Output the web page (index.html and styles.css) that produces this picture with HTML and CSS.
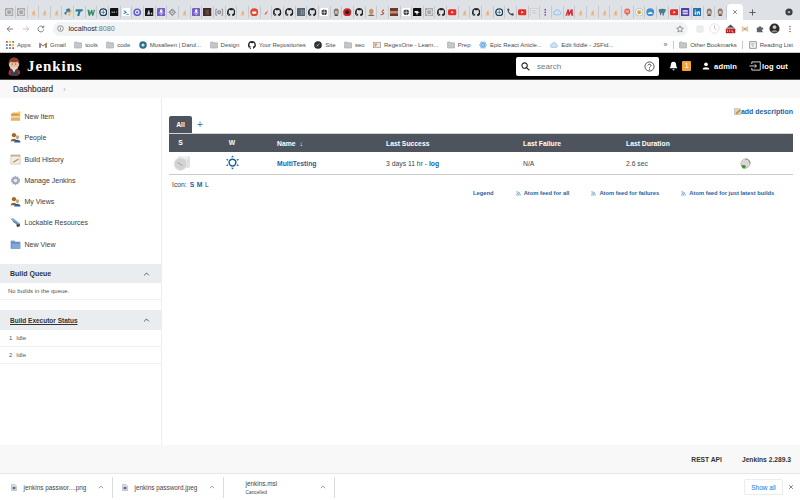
FILE: index.html
```html
<!DOCTYPE html>
<html lang="en">
<head>
<meta charset="utf-8">
<title>Dashboard [Jenkins]</title>
<link rel="stylesheet" href="styles.css">
</head>
<body>
<svg class="defs" aria-hidden="true">
  <symbol id="swirl" viewBox="0 0 10 10"><rect width="10" height="10" rx="1" fill="#a9a9a9"/><rect x="2" y="2" width="6" height="6" rx="2" fill="none" stroke="#e2e2e2" stroke-width="1.2"/></symbol>
  <symbol id="butler" viewBox="0 0 10 10"><path d="M3 9l1-4 2-3 1 1-.5 3 1.500 3z" fill="#eec4a0"/><path d="M4 7l2-3 1 3z" fill="#e3a670"/></symbol>
  <symbol id="py" viewBox="0 0 10 10"><path d="M5 .5c-2 0-2.500 1-2.500 2V4H6v.5H1.800C.8 4.500.5 5.500.5 6s.4 2 1.300 2h1V6.500C2.800 5.500 3.500 5 4.500 5h2c.8 0 1-.6 1-1.200V2.500C7.500 1 6.500.5 5 .5z" fill="#3b78a8"/><path d="M5 9.500c2 0 2.500-1 2.500-2V6H4v-.5h4.200c1 0 1.300-1 1.300-1.500s-.4-2-1.300-2h-1v1.500c0 1-.7 1.500-1.700 1.500" fill="#f3c93f"/></symbol>
  <symbol id="tt" viewBox="0 0 10 10"><path d="M1 1.500h8.500L8.500 4H6.500L5 9.500H2.500L4 4H.5z" fill="#2b7f95"/></symbol>
  <symbol id="w" viewBox="0 0 10 10"><path d="M.5 2h2l1 4 1.500-4h1l1 4 1-4h1.500L7.500 9H6L5 5.500 3.500 9H2z" fill="#2f8c62"/></symbol>
  <symbol id="ring" viewBox="0 0 10 10"><circle cx="5" cy="5" r="4" fill="#fff" stroke="#1e3a4c" stroke-width="1.600"/><path d="M5 2.500v5M2.500 5h5" stroke="#3d87b5" stroke-width="1.300"/></symbol>
  <symbol id="dev" viewBox="0 0 10 10"><rect width="10" height="10" rx="1" fill="#111"/><path d="M2 4h1v2H2zM4.300 4h1.200v2H4.300zM7 4h1l-.5 2z" fill="#ddd"/></symbol>
  <symbol id="chev" viewBox="0 0 10 10"><rect width="10" height="10" rx="2" fill="#fff"/><path d="M2 3l3 2-3 2" fill="none" stroke="#2f7fd1" stroke-width="1.200"/><path d="M5 7.500h3" stroke="#2f7fd1"/></symbol>
  <symbol id="indigo" viewBox="0 0 10 10"><circle cx="5" cy="5" r="3.700" fill="none" stroke="#5a57c9" stroke-width="1.600"/><circle cx="5" cy="5" r="1.300" fill="#5a57c9"/></symbol>
  <symbol id="blk" viewBox="0 0 10 10"><rect width="10" height="10" rx="1" fill="#16181c"/><path d="M2.500 7.500L4 2.500h1l1 5zM7 5.500h1.500v2H7z" fill="#ccc"/></symbol>
  <symbol id="mic" viewBox="0 0 10 10"><rect width="10" height="10" rx="1.500" fill="#7560c9"/><rect x="3.700" y="1.500" width="2.600" height="4.500" rx="1.300" fill="#fff"/><path d="M2.800 5c0 3 4.400 3 4.400 0M5 7v1.500" fill="none" stroke="#fff" stroke-width=".7"/></symbol>
  <symbol id="diamond" viewBox="0 0 10 10"><path d="M5 .5L9.500 5 5 9.500.5 5z" fill="#8b8b8b"/><path d="M5 2.500L7.500 5 5 7.500 2.500 5z" fill="#dcdcdc"/><path d="M5 4L6 5 5 6 4 5z" fill="#777"/></symbol>
  <symbol id="photo" viewBox="0 0 10 10"><rect width="10" height="10" fill="#3c2c30"/><rect x="3" y="2" width="4" height="6" fill="#6e4638"/></symbol>
  <symbol id="obox" viewBox="0 0 10 10"><path d="M2.500 1.500H1v7h1.500M7.500 1.500H9v7H7.500" fill="none" stroke="#666" stroke-width=".8"/><circle cx="5" cy="5" r="1.700" fill="none" stroke="#555" stroke-width="1"/></symbol>
  <symbol id="gh" viewBox="0 0 16 16"><path fill="#222" d="M8 .2a8 8 0 0 0-2.500 15.600c.4.100.5-.2.500-.4v-1.400c-2.200.5-2.700-1-2.700-1-.4-.9-.9-1.200-.9-1.200-.7-.5.100-.5.100-.5.800.1 1.200.8 1.200.8.700 1.200 1.900.9 2.300.7.100-.5.300-.9.500-1.100-1.800-.2-3.600-.9-3.600-4 0-.9.300-1.600.8-2.100-.1-.2-.4-1 .1-2.100 0 0 .7-.2 2.200.8a7.600 7.600 0 0 1 4 0c1.500-1 2.200-.8 2.200-.8.500 1.100.2 1.900.1 2.100.5.600.8 1.300.8 2.100 0 3.100-1.900 3.700-3.700 3.900.3.300.6.800.6 1.500v2.200c0 .2.100.5.600.4A8 8 0 0 0 8 .2z"/></symbol>
  <symbol id="redc" viewBox="0 0 10 10"><circle cx="5" cy="5" r="4.700" fill="#e2492f"/><rect x="2.500" y="4" width="5" height="2.800" rx="1" fill="#fff"/></symbol>
  <symbol id="tick" viewBox="0 0 10 10"><path d="M3 7l1-1 3-3.500L5.500 6.500 3.500 8z" fill="#e2453c"/></symbol>
  <symbol id="ebox" viewBox="0 0 10 10"><rect width="10" height="10" rx=".8" fill="#566470"/><path d="M5 2v6M6.500 3h2M6.500 5h2M6.500 7h2" stroke="#b7c1c8" stroke-width=".8"/></symbol>
  <symbol id="dgear" viewBox="0 0 10 10"><rect width="10" height="10" rx="2" fill="#fff"/><circle cx="5" cy="5" r="3.300" fill="#333"/><path d="M5 1v8M1 5h8" stroke="#fff" stroke-width=".7"/></symbol>
  <symbol id="head" viewBox="0 0 10 10"><ellipse cx="5" cy="4.500" rx="3" ry="4" fill="#86766c"/><ellipse cx="5" cy="5" rx="1.800" ry="2" fill="#dcb9a0"/><path d="M2.500 9.500c.5-2 4.500-2 5 0z" fill="#555"/></symbol>
  <symbol id="redb" viewBox="0 0 10 10"><circle cx="5" cy="5" r="4.800" fill="#d8232a"/><circle cx="5" cy="5" r="2.400" fill="#222"/></symbol>
  <symbol id="tan" viewBox="0 0 10 10"><rect x=".5" width="9" height="10" fill="#e8e2d8"/><ellipse cx="5" cy="4" rx="2.600" ry="3.200" fill="#b79678"/><path d="M1 10c.5-3 7.500-3 8 0z" fill="#75675c"/></symbol>
  <symbol id="jtag" viewBox="0 0 10 10"><path d="M7 2C5 3 4 5 6 5.500S6 8 3 8" fill="none" stroke="#a8593f" stroke-width="1.200"/></symbol>
  <symbol id="brown" viewBox="0 0 10 10"><rect width="10" height="10" fill="#70372c"/><rect y="3.500" width="10" height="3" fill="#c08a70"/></symbol>
  <symbol id="kw" viewBox="0 0 10 10"><rect width="10" height="10" rx="1" fill="#111"/><path d="M2 3.500h3L4 2.500l4 3H5.500v2H4V5.500H2z" fill="#fff"/></symbol>
  <symbol id="yt" viewBox="0 0 10 10"><rect y="1.500" width="10" height="7" rx="1.800" fill="#e52d27"/><path d="M4 3.500L6.700 5 4 6.500z" fill="#fff"/></symbol>
  <symbol id="phone" viewBox="0 0 10 10"><path d="M1.500 1c0 4 3 7.500 7 8l.8-1.800L7 6 6 7C4.500 6 3.500 4.500 3.200 3.200l1-1L3 .5z" fill="#39454f"/></symbol>
  <symbol id="lines" viewBox="0 0 10 10"><rect x=".5" y=".5" width="9" height="9" fill="#eceded" stroke="#b9bcbf" stroke-width=".6"/><path d="M2 3h6M2 5h6M2 7h6" stroke="#a9acaf" stroke-width=".7"/></symbol>
  <symbol id="pdot" viewBox="0 0 10 10"><circle cx="5" cy="2" r="1" fill="#7a3fb8"/><circle cx="5" cy="5" r="1" fill="#7a3fb8"/><circle cx="5" cy="8" r="1" fill="#7a3fb8"/></symbol>
  <symbol id="cloud" viewBox="0 0 10 10"><path d="M2.500 8a2 2 0 0 1-.3-4A3 3 0 0 1 8 4.200 2 2 0 0 1 8 8z" fill="#cfe2f5" stroke="#6fa6dc" stroke-width=".6"/></symbol>
  <symbol id="mred" viewBox="0 0 10 10"><path d="M.5 9L3 1.500h1.500L5 5l2-3.500h2L9.500 9h-2L7 5.500 5 9H3.800L3.500 5.500 2.500 9z" fill="#d6303a"/></symbol>
  <symbol id="pin" viewBox="0 0 10 10"><circle cx="5" cy="4" r="3.500" fill="#e8604c"/><path d="M3 3.300h4M3 4.700h4" stroke="#fff" stroke-width=".7"/><path d="M5 7v2.500" stroke="#e8604c"/></symbol>
  <symbol id="ylw" viewBox="0 0 10 10"><circle cx="5" cy="5" r="4.500" fill="#fff" stroke="#8cb4dc" stroke-width=".8"/><circle cx="5" cy="5" r="2.600" fill="#f0b93c"/><path d="M4 3.500l1.500 1.500L4.500 7" stroke="#c5533a" fill="none" stroke-width=".7"/></symbol>
  <symbol id="bluec" viewBox="0 0 10 10"><circle cx="5" cy="5" r="4.600" fill="#3e8fd0"/><path d="M2 7c1-3 5-3 6 0z" fill="#e8eef3"/></symbol>
  <symbol id="eleph" viewBox="0 0 10 10"><path d="M1 1.500c2-1 6-1 8 0 .5 2-.5 3.500-1.500 4L6.500 9h-1L5 6 4 6 3.500 8.500h-1L2 5.500C1 4.500.5 3 1 1.500z" fill="#4e7b94"/></symbol>
  <symbol id="psq" viewBox="0 0 10 10"><rect width="10" height="10" rx=".8" fill="#4f3fa3"/><rect x="2" y="2.500" width="6" height="5" fill="#e1dcf5"/><path d="M2 5h6" stroke="#4f3fa3"/></symbol>
  <symbol id="li" viewBox="0 0 10 10"><rect width="10" height="10" rx="1" fill="#1f6fb2"/><path d="M2 4h1.300v4H2zM2 2h1.300v1.200H2zM4.300 4h1.200v.6c.8-1.200 2.700-.8 2.700 1V8H6.900V6c0-1-1.300-1-1.300 0v2H4.300z" fill="#fff"/></symbol>
  <symbol id="folder" viewBox="0 0 10 9"><path d="M.5 1.500C.5 1 .8.700 1.200.700h2.600l1 1h4c.5 0 .8.300.8.800v5.200c0 .4-.3.700-.8.700H1.200c-.4 0-.7-.3-.7-.7z" fill="#c4c7ca" stroke="#85888b" stroke-width=".5"/></symbol>
  <symbol id="rss" viewBox="0 0 8 8"><circle cx="1.500" cy="6.500" r="1" fill="#3d78b4"/><path d="M.7 3.500a3.800 3.800 0 0 1 3.800 3.800M.7 1a6.300 6.300 0 0 1 6.300 6.300" fill="none" stroke="#3d78b4"/></symbol>
  <symbol id="updn" viewBox="0 0 10 6"><path d="M1.500 5L5 1.500 8.500 5" fill="none" stroke="currentColor" stroke-width="1.200"/></symbol>
  <symbol id="doc" viewBox="0 0 8 10"><path d="M.5.500H5L7.500 3v6.500H.5z" fill="#dfe4ea" stroke="#8a8f96" stroke-width=".6"/><rect x="2" y="4" width="4" height="3.500" fill="#5b6f7f"/></symbol>
  <symbol id="boxi" viewBox="0 0 12 12"><path d="M1 4l2-2.500h6L11 4v6.500H1z" fill="#e8b26a"/><path d="M1 6.500h10" stroke="#fff6e0"/><path d="M1 4h10" stroke="#b57d3c" stroke-width=".7"/><circle cx="10" cy="2" r="1.700" fill="#f6d64a"/></symbol>
  <symbol id="peop" viewBox="0 0 12 12"><circle cx="4.300" cy="3.500" r="2.300" fill="#9a6a34"/><path d="M.8 10c0-3.500 6.500-3.500 6.500 0z" fill="#8a6a2c"/><circle cx="8" cy="5.500" r="2" fill="#d6a468"/><path d="M4.500 11.500c0-4 7-4 7 0z" fill="#2d5f9c"/></symbol>
  <symbol id="hist" viewBox="0 0 12 12"><rect x="1" y="1" width="10" height="10" fill="#f1f0e7" stroke="#b9b6a7" stroke-width=".6"/><path d="M1 2h10" stroke="#b48a55" stroke-width="1"/><path d="M3 8.500l6-3.500.8 1-5.500 3.500z" fill="#c89355"/></symbol>
  <symbol id="mgear" viewBox="0 0 12 12"><path d="M6 .5l1 1.800 2-.6.3 2 2 .6-1 1.700 1 1.700-2 .6-.3 2-2-.6-1 1.800-1-1.800-2 .6-.3-2-2-.6 1-1.700-1-1.700 2-.6.3-2 2 .6z" fill="#9fa8bb"/><circle cx="6" cy="6" r="2" fill="#e6e9f0"/></symbol>
  <symbol id="lock" viewBox="0 0 12 12"><path d="M.7 2.500L3 1l8 6-1.500 2z" fill="#7ba7d6"/><path d="M3 4.500L9.500 9l1.500-1" fill="none" stroke="#555" stroke-width="1"/><path d="M6.500 8.500l4-.5 .5 2-3 1z" fill="#444"/></symbol>
  <symbol id="nview" viewBox="0 0 12 12"><path d="M.8 2h4l1 1h5.400v7.500H.8z" fill="#5f8fc2"/><path d="M.8 2h4l1 1H.8z" fill="#9aa6b2"/><path d="M2 5h9.200v5.500H2z" fill="#81a9d6"/></symbol>
  <symbol id="statusi" viewBox="0 0 18 16"><rect x="5" y="1" width="12" height="12" rx="2" fill="#dfe0e2"/><rect x="7" y="1" width="8" height="3" fill="#f0f0f1"/><circle cx="7.500" cy="9" r="6.500" fill="#d2d3d4" stroke="#ececec" stroke-width=".8"/><path d="M4.500 7.500l3 1.500 2 2" stroke="#888" stroke-width=".7" fill="none"/></symbol>
  <symbol id="sun" viewBox="0 0 16 16"><circle cx="8" cy="8" r="3.600" fill="none" stroke="#1d5f9c" stroke-width="1.600"/><path d="M8 .5l1.500 2H6.500zM8 15.500l1.500-2H6.500zM1.300 4.200l2.400.3-1.400 2zM14.700 4.200l-2.400.3 1.400 2zM1.300 11.800l2.400-.3-1.400-2zM14.700 11.800l-2.400-.3 1.400-2z" fill="#1d5f9c"/></symbol>
  <symbol id="runi" viewBox="0 0 12 12"><circle cx="6" cy="6" r="5" fill="#d8d8d4" stroke="#a9ada6" stroke-width=".7"/><path d="M6 1a5 5 0 0 1 5 5" fill="none" stroke="#7e7a6c" stroke-width="1"/><path d="M1 8h5v3.500H3z" fill="#56a144"/><path d="M3 7.500L6.500 9.500 3 11z" fill="#3d8b34"/></symbol>
  <symbol id="edit" viewBox="0 0 10 10"><rect y="1" width="9" height="9" fill="#d9d3bd" stroke="#a9a48f" stroke-width=".5"/><path d="M2.500 7.500L8 2l1.500 1.500L4 9z" fill="#c88327"/></symbol>
</svg>

<div class="tabstrip">
  <div class="tabs">
    <span class="t"><svg class="fav"><use href="#swirl"/></svg></span>
    <span class="t"><svg class="fav"><use href="#swirl"/></svg></span>
    <span class="t"><svg class="fav"><use href="#butler"/></svg></span>
    <span class="t"><svg class="fav"><use href="#butler"/></svg></span>
    <span class="t"><svg class="fav"><use href="#butler"/></svg></span>
    <span class="t"><svg class="fav"><use href="#py"/></svg></span>
    <span class="t"><svg class="fav"><use href="#tt"/></svg></span>
    <span class="t"><svg class="fav"><use href="#w"/></svg></span>
    <span class="t"><svg class="fav"><use href="#ring"/></svg></span>
    <span class="t"><svg class="fav"><use href="#dev"/></svg></span>
    <span class="t"><svg class="fav"><use href="#chev"/></svg></span>
    <span class="t"><svg class="fav"><use href="#indigo"/></svg></span>
    <span class="t"><svg class="fav"><use href="#blk"/></svg></span>
    <span class="t"><svg class="fav"><use href="#mic"/></svg></span>
    <span class="t"><svg class="fav"><use href="#diamond"/></svg></span>
    <span class="t"><svg class="fav"><use href="#butler"/></svg></span>
    <span class="t"><svg class="fav"><use href="#mic"/></svg></span>
    <span class="t"><svg class="fav"><use href="#photo"/></svg></span>
    <span class="t"><svg class="fav"><use href="#obox"/></svg></span>
    <span class="t"><svg class="fav"><use href="#gh"/></svg></span>
    <span class="t"><svg class="fav"><use href="#butler"/></svg></span>
    <span class="t"><svg class="fav"><use href="#redc"/></svg></span>
    <span class="t"><svg class="fav"><use href="#tick"/></svg></span>
    <span class="t"><svg class="fav"><use href="#gh"/></svg></span>
    <span class="t"><svg class="fav"><use href="#gh"/></svg></span>
    <span class="t"><svg class="fav"><use href="#ebox"/></svg></span>
    <span class="t"><svg class="fav"><use href="#gh"/></svg></span>
    <span class="t"><svg class="fav"><use href="#dgear"/></svg></span>
    <span class="t"><svg class="fav"><use href="#head"/></svg></span>
    <span class="t"><svg class="fav"><use href="#redb"/></svg></span>
    <span class="t"><svg class="fav"><use href="#gh"/></svg></span>
    <span class="t"><svg class="fav"><use href="#tan"/></svg></span>
    <span class="t"><svg class="fav"><use href="#jtag"/></svg></span>
    <span class="t"><svg class="fav"><use href="#brown"/></svg></span>
    <span class="t"><svg class="fav"><use href="#dgear"/></svg></span>
    <span class="t"><svg class="fav"><use href="#kw"/></svg></span>
    <span class="t"><svg class="fav"><use href="#swirl"/></svg></span>
    <span class="t"><svg class="fav"><use href="#gh"/></svg></span>
    <span class="t"><svg class="fav"><use href="#yt"/></svg></span>
    <span class="t"><svg class="fav"><use href="#butler"/></svg></span>
    <span class="t"><svg class="fav"><use href="#gh"/></svg></span>
    <span class="t"><svg class="fav"><use href="#butler"/></svg></span>
    <span class="t"><svg class="fav"><use href="#ring"/></svg></span>
    <span class="t"><svg class="fav"><use href="#phone"/></svg></span>
    <span class="t"><svg class="fav"><use href="#yt"/></svg></span>
    <span class="t"><svg class="fav"><use href="#lines"/></svg></span>
    <span class="t"><svg class="fav"><use href="#pdot"/></svg></span>
    <span class="t"><svg class="fav"><use href="#cloud"/></svg></span>
    <span class="t"><svg class="fav"><use href="#mred"/></svg></span>
    <span class="t"><svg class="fav"><use href="#butler"/></svg></span>
    <span class="t"><svg class="fav"><use href="#butler"/></svg></span>
    <span class="t"><svg class="fav"><use href="#butler"/></svg></span>
    <span class="t"><svg class="fav"><use href="#butler"/></svg></span>
    <span class="t"><svg class="fav"><use href="#pin"/></svg></span>
    <span class="t"><svg class="fav"><use href="#ylw"/></svg></span>
    <span class="t"><svg class="fav"><use href="#bluec"/></svg></span>
    <span class="t"><svg class="fav"><use href="#eleph"/></svg></span>
    <span class="t"><svg class="fav"><use href="#yt"/></svg></span>
    <span class="t"><svg class="fav"><use href="#psq"/></svg></span>
    <span class="t"><svg class="fav"><use href="#li"/></svg></span>
    <span class="t"><svg class="fav"><use href="#head"/></svg></span>
    <span class="t"><svg class="fav"><use href="#head"/></svg></span>
  </div>
  <div class="tab-active"><svg class="tab-x" viewBox="0 0 8 8"><path d="M1.500 1.500l5 5m0-5l-5 5" stroke="#5f6368" stroke-width="1"/></svg></div>
  <svg class="tab-plus" viewBox="0 0 8 8"><path d="M4 .5v7M.5 4h7" stroke="#4a4d51" stroke-width="1"/></svg>
  <svg class="tab-ball" viewBox="0 0 10 10"><circle cx="5" cy="5" r="4.500" fill="#3c4043"/><path d="M3 4.500L5 7l2-2.500z" fill="#dee1e6"/></svg>
</div>

<div class="toolbar">
  <svg class="nav" viewBox="0 0 10 10"><path d="M9 5H1.500M5 1.500L1.500 5 5 8.500" fill="none" stroke="#5f6368" stroke-width="1"/></svg>
  <svg class="nav" viewBox="0 0 10 10"><path d="M1 5h7.500M5 1.500L8.500 5 5 8.500" fill="none" stroke="#b5b8bc" stroke-width="1"/></svg>
  <svg class="nav" viewBox="0 0 10 10"><path d="M8.500 5.500A3.600 3.600 0 1 1 7.500 2.500M8.500 .8v2.500H6" fill="none" stroke="#5f6368" stroke-width="1"/></svg>
  <div class="omni">
    <svg class="omni-i" viewBox="0 0 10 10"><circle cx="5" cy="5" r="4" fill="none" stroke="#5f6368" stroke-width=".9"/><path d="M5 4.300v3M5 2.500v1" stroke="#5f6368" stroke-width=".9"/></svg>
    <span class="url">localhost<span class="url-port">:8080</span></span>
    <svg class="omni-star" viewBox="0 0 10 10"><path d="M5 1l1.200 2.700 2.900.3-2.200 1.900.7 2.900L5 7.300 2.400 8.800l.7-2.900L.9 4l2.900-.3z" fill="none" stroke="#5f6368" stroke-width=".8"/></svg>
  </div>
  <div class="exts">
    <svg class="ext" viewBox="0 0 10 10"><rect x="1" y="1" width="8" height="8" rx="1" fill="#eceded" stroke="#dcdcdc" stroke-dasharray="1 1"/></svg>
    <svg class="ext ext-lg" viewBox="0 0 14 14"><circle cx="7" cy="7" r="6" fill="#fff" stroke="#dedede"/><path d="M7 3v4l2.500 2" stroke="#bbb" fill="none"/></svg>
    <svg class="ext ext-lg" viewBox="0 0 14 14"><path d="M2 6l5-4 5 4z" fill="#555"/><rect x="1" y="7" width="12" height="6" fill="#b8191d"/><path d="M3 8.500v3M6 8.500v3M9 8.500v3h2" stroke="#fff" stroke-width=".8" fill="none"/></svg>
    <svg class="ext" viewBox="0 0 10 10"><path d="M1 1l3 2h2l3-2v8L6 7H4L1 9z" fill="#e8c9a0"/><circle cx="5" cy="5" r="1" fill="#5a8fb5"/></svg>
    <svg class="ext" viewBox="0 0 10 10"><path d="M1 3h2.500c0-2 3-2 3 0H9v2.300c-2 0-2 3 0 3V9H1z" fill="#5f6368"/></svg>
    <svg class="ext ext-lg" viewBox="0 0 12 12"><circle cx="6" cy="6" r="5.500" fill="#2b2d31"/><circle cx="6" cy="4.500" r="2" fill="#d8c9b2"/><path d="M2.500 10c1-3 6-3 7 0" fill="#8d8a80"/></svg>
    <svg class="ext" viewBox="0 0 10 10"><circle cx="5" cy="1.800" r=".9" fill="#5f6368"/><circle cx="5" cy="5" r=".9" fill="#5f6368"/><circle cx="5" cy="8.200" r=".9" fill="#5f6368"/></svg>
  </div>
</div>

<div class="bookmarks">
  <span class="bm"><svg class="bm-i" viewBox="0 0 9 9"><g fill="#e94235"><rect width="2" height="2"/><rect x="3.500" width="2" height="2" fill="#f4b400"/><rect x="7" width="2" height="2" fill="#34a853"/><rect y="3.500" width="2" height="2" fill="#4285f4"/><rect x="3.500" y="3.500" width="2" height="2"/><rect x="7" y="3.500" width="2" height="2" fill="#f4b400"/><rect y="7" width="2" height="2" fill="#34a853"/><rect x="3.500" y="7" width="2" height="2" fill="#4285f4"/><rect x="7" y="7" width="2" height="2"/></g></svg>Apps</span>
  <span class="bm"><svg class="bm-i" viewBox="0 0 10 8"><path d="M.5 7.500V1l4.500 3.500L9.500 1v6.500H8V3.500L5 6 2 3.500v4z" fill="#d93f33"/><path d="M.5 2v5.500H2V3.500z" fill="#4285f4"/><path d="M9.500 2v5.500H8V3.500z" fill="#34a853"/></svg>Gmail</span>
  <span class="bm"><svg class="bm-i"><use href="#folder"/></svg>tools</span>
  <span class="bm"><svg class="bm-i"><use href="#folder"/></svg>code</span>
  <span class="bm"><svg class="bm-i" viewBox="0 0 10 10"><circle cx="5" cy="5" r="4.700" fill="#2f6e88"/><circle cx="5" cy="5" r="2" fill="#d6e2e8"/></svg>Musalleen | Darul...</span>
  <span class="bm"><svg class="bm-i"><use href="#folder"/></svg>Design</span>
  <span class="bm"><svg class="bm-i"><use href="#gh"/></svg>Your Repositories</span>
  <span class="bm"><svg class="bm-i" viewBox="0 0 10 10"><circle cx="5" cy="5" r="4.800" fill="#2a2d31"/><path d="M3 7l4-4M3.500 4.500l2 2" stroke="#ddd" stroke-width=".8"/></svg>Site</span>
  <span class="bm"><svg class="bm-i"><use href="#folder"/></svg>seo</span>
  <span class="bm"><svg class="bm-i" viewBox="0 0 10 9"><rect x=".5" y="1" width="9" height="7" fill="#efe6d6" stroke="#777" stroke-width=".6"/><path d="M2 3.500h3M2 5.500h2" stroke="#b2562f"/></svg>RegexOne - Learn...</span>
  <span class="bm"><svg class="bm-i"><use href="#folder"/></svg>Prep</span>
  <span class="bm"><svg class="bm-i" viewBox="0 0 10 10"><g fill="none" stroke="#4a9be8" stroke-width=".8"><ellipse cx="5" cy="5" rx="4.500" ry="1.800"/><ellipse cx="5" cy="5" rx="4.500" ry="1.800" transform="rotate(60 5 5)"/><ellipse cx="5" cy="5" rx="4.500" ry="1.800" transform="rotate(120 5 5)"/></g><circle cx="5" cy="5" r="1" fill="#4a9be8"/></svg>Epic React Article...</span>
  <span class="bm"><svg class="bm-i"><use href="#cloud"/></svg>Edit fiddle - JSFid...</span>
  <span class="bm-more">»</span>
  <span class="bm-sep"></span>
  <span class="bm"><svg class="bm-i"><use href="#folder"/></svg>Other Bookmarks</span>
  <span class="bm-sep"></span>
  <span class="bm"><svg class="bm-i" viewBox="0 0 10 10"><rect x="1" y="1" width="8" height="8" fill="none" stroke="#5f6368" stroke-width=".9"/><path d="M5 2.500v5M3 3.500h1M3 5h1M6 3.500h1" stroke="#5f6368" stroke-width=".7"/></svg>Reading List</span>
</div>

<header class="jk-head">
  <svg class="jk-logo" viewBox="0 0 16 22"><path d="M2 19c0-4 1-6 6-6s7 2 6.500 6c-.2 2-2 3-6 3s-6.500-1-6.500-3z" fill="#3d3f4a"/><path d="M6 14l2 4 2-4z" fill="#fff"/><ellipse cx="8" cy="8" rx="6" ry="7" fill="#e8bfa3"/><path d="M2 9C1 3 5 .5 8.500.5S15 4 14 9c-.5-2-1-3-2.500-3.500C9 6.500 5 6 4 5.500 3 6.500 2.500 7.500 2 9z" fill="#8d3a2b"/><path d="M4 12c1 2.500 7 2.500 8 0-1 .5-7 .5-8 0z" fill="#f0e4da"/><circle cx="6" cy="8" r=".6" fill="#222"/><circle cx="10" cy="8" r=".6" fill="#222"/><path d="M2.500 15l-1 5 2.500 1 1-5zM12 16l1 4 2-.500-.5-4z" fill="#c0242c"/></svg>
  <span class="jk-title">Jenkins</span>
  <div class="jk-search">
    <svg class="jk-mag" viewBox="0 0 10 10"><circle cx="4" cy="4" r="3" fill="none" stroke="#222" stroke-width="1.200"/><path d="M6.200 6.200L9.300 9.300" stroke="#222" stroke-width="1.300"/></svg>
    <span class="jk-ph">search</span>
    <svg class="jk-help" viewBox="0 0 12 12"><circle cx="6" cy="6" r="5" fill="none" stroke="#333" stroke-width=".9"/><path d="M4.300 4.800C4.300 3 7.800 3 7.800 4.800 7.800 6 6 6 6 7.300" fill="none" stroke="#333" stroke-width=".9"/><circle cx="6" cy="8.900" r=".6" fill="#333"/></svg>
  </div>
  <svg class="jk-bell" viewBox="0 0 10 11"><path d="M5 .8c-2.200 0-3 1.700-3 3.700 0 2-.9 3-1.400 3.500h8.800C8.900 7.500 8 6.500 8 4.500 8 2.500 7.200.8 5 .8z" fill="#fff"/><path d="M3.800 9.200a1.200 1.200 0 0 0 2.400 0z" fill="#fff"/></svg>
  <span class="jk-badge">1</span>
  <svg class="jk-user" viewBox="0 0 10 10"><circle cx="5" cy="2.800" r="2.300" fill="#fff"/><path d="M.8 9.500c0-4 8.400-4 8.400 0z" fill="#fff"/></svg>
  <b class="jk-link">admin</b>
  <svg class="jk-out" viewBox="0 0 13 11"><path d="M3 3.300V1h9.300v9H3V7.700" fill="none" stroke="#fff" stroke-width=".9"/><path d="M.5 5.500h7.500M6 3.500l2.200 2-2.200 2" fill="none" stroke="#fff" stroke-width=".9"/></svg>
  <b class="jk-link jk-link-out">log out</b>
</header>

<nav class="crumbs"><span class="crumb">Dashboard</span><svg class="crumb-c" viewBox="0 0 4 6"><path d="M1 1l2 2-2 2" fill="none" stroke="#888" stroke-width=".7"/></svg></nav>

<div class="page">
  <aside class="side">
    <ul class="tasks">
      <li class="task"><svg class="task-i"><use href="#boxi"/></svg>New Item</li>
      <li class="task"><svg class="task-i"><use href="#peop"/></svg>People</li>
      <li class="task"><svg class="task-i"><use href="#hist"/></svg>Build History</li>
      <li class="task"><svg class="task-i"><use href="#mgear"/></svg>Manage Jenkins</li>
      <li class="task"><svg class="task-i"><use href="#peop"/></svg>My Views</li>
      <li class="task"><svg class="task-i"><use href="#lock"/></svg>Lockable Resources</li>
      <li class="task"><svg class="task-i"><use href="#nview"/></svg>New View</li>
    </ul>
    <section class="pane pane-q">
      <div class="pane-h"><span>Build Queue</span><svg class="pane-c"><use href="#updn"/></svg></div>
      <div class="pane-row pane-note">No builds in the queue.</div>
    </section>
    <section class="pane">
      <div class="pane-h"><span class="pane-u">Build Executor Status</span><svg class="pane-c"><use href="#updn"/></svg></div>
      <div class="pane-row"><span class="pane-n">1</span>Idle</div>
      <div class="pane-row"><span class="pane-n">2</span>Idle</div>
    </section>
  </aside>
  <main class="main">
    <div class="desc"><svg class="desc-i"><use href="#edit"/></svg><a class="lnk">add description</a></div>
    <div class="viewtabs"><span class="vt">All</span><span class="vt-add">+</span></div>
    <table class="jobs">
      <colgroup><col class="c1"><col class="c2"><col class="c3"><col class="c4"><col class="c5"><col class="c6"><col class="c7"></colgroup>
      <thead>
        <tr><th class="ctr">S</th><th class="ctr">W</th><th>Name <span class="arrow">↓</span></th><th>Last Success</th><th>Last Failure</th><th>Last Duration</th><th></th></tr>
      </thead>
      <tbody>
        <tr><td class="ctr"><svg class="st-i"><use href="#statusi"/></svg></td><td class="ctr"><svg class="w-i"><use href="#sun"/></svg></td><td><a class="lnk">MultiTesting</a></td><td>3 days 11 hr - <a class="lnk">log</a></td><td>N/A</td><td>2.6 sec</td><td><svg class="run-i"><use href="#runi"/></svg></td></tr>
      </tbody>
    </table>
    <div class="iconsize">Icon:<a class="lnk sz sz-first">S</a><a class="lnk sz">M</a><span class="sz">L</span></div>
    <div class="feeds">
      <a class="lnk feed feed-legend">Legend</a>
      <a class="lnk feed feed-a"><svg class="rss"><use href="#rss"/></svg>Atom feed for all</a>
      <a class="lnk feed feed-b"><svg class="rss"><use href="#rss"/></svg>Atom feed for failures</a>
      <a class="lnk feed feed-c"><svg class="rss"><use href="#rss"/></svg>Atom feed for just latest builds</a>
    </div>
  </main>
</div>

<footer class="foot"><b>REST API</b><b>Jenkins 2.289.3</b></footer>

<div class="downloads">
  <div class="dl"><svg class="dl-i"><use href="#doc"/></svg><span class="dl-name">jenkins passwor....png</span><svg class="dl-c"><use href="#updn"/></svg></div>
  <div class="dl"><svg class="dl-i"><use href="#doc"/></svg><span class="dl-name">jenkins password.jpeg</span><svg class="dl-c"><use href="#updn"/></svg></div>
  <div class="dl dl-stack"><div class="dl-text"><span class="dl-name">jenkins.msi</span><span class="dl-sub">Cancelled</span></div><svg class="dl-c"><use href="#updn"/></svg></div>
  <button class="showall">Show all</button>
  <svg class="dl-x" viewBox="0 0 8 8"><path d="M1.500 1.500l5 5m0-5l-5 5" stroke="#5f6368" stroke-width="1"/></svg>
</div>
</body>
</html>
```
FILE: styles.css
```css
* { box-sizing: border-box; }
html, body { margin: 0; padding: 0; }
body {
  width: 800px; height: 500px; overflow: hidden;
  display: flex; flex-direction: column;
  font-family: "Liberation Sans", Arial, sans-serif;
  color: #333; background: #fff;
}
.defs { width: 0; height: 0; display: block; overflow: hidden; flex: none; }
svg { display: block; flex: none; }
a { text-decoration: none; }

/* browser chrome */
.tabstrip { height: 20px; flex: none; background: #dee1e6; display: flex; align-items: flex-end; }
.tabs { display: flex; width: 727px; padding: 4px 0 0 4.200px; height: 20px; align-items: center; }
.t { flex: 1 1 0; min-width: 0; height: 12px; display: flex; align-items: center; justify-content: center; border-right: 1px solid #c6c9ce; }
.fav { width: 8.500px; height: 8.500px; }
.tab-active { width: 16px; height: 16px; background: #fff; border-radius: 4px 4px 0 0; display: flex; align-items: center; justify-content: center; }
.tab-x { width: 6px; height: 6px; }
.tab-plus { width: 7px; height: 7px; margin: 0 0 4px 6px; }
.tab-ball { width: 8px; height: 8px; margin: 0 0 4px 29px; }

.toolbar { height: 17px; flex: none; display: flex; align-items: center; padding-left: 6px; background: #fff; }
.nav { width: 8px; height: 8px; margin-right: 7.500px; }
.omni { width: 635px; height: 14px; border-radius: 7px; background: #f1f3f4; display: flex; align-items: center; padding: 0 4px; }
.omni-i { width: 7px; height: 7px; }
.url { font: 7.200px "Liberation Sans", sans-serif; color: #27292c; margin-left: 5px; }
.url-port { color: #70757a; }
.omni-star { width: 8px; height: 8px; margin-left: auto; }
.exts { display: flex; align-items: center; margin-left: 8px; gap: 6.500px; }
.ext { width: 8px; height: 8px; }
.ext-lg { width: 11px; height: 11px; margin: 0 -1px; }

.bookmarks { height: 15px; flex: none; display: flex; align-items: center; padding: 0 7px 0 6px; background: #fff; font-size: 6px; color: #4a4d51; gap: 8.400px; }
.bm { display: flex; align-items: center; gap: 3px; white-space: nowrap; }
.bm-i { width: 8px; height: 8px; }
.bm-more { margin-left: auto; font-size: 7px; color: #5f6368; }
.bm-sep { width: 1px; height: 8px; background: #c8cbce; margin: 0 -3px; }

/* jenkins header */
.jk-head { height: 28px; flex: none; background: #000; border-top: 1px solid #c8c8c8; border-bottom: 1px solid #4a4a4a; display: flex; align-items: center; padding: 0 12px 0 7px; color: #fff; }
.jk-logo { width: 14px; height: 19px; }
.jk-title { font: bold 15px "Liberation Serif", serif; letter-spacing: .9px; margin-left: 6px; }
.jk-search { width: 143px; height: 19px; margin-left: auto; background: #fff; border-radius: 2px; display: flex; align-items: center; padding: 0 4px 0 5px; }
.jk-mag { width: 9px; height: 9px; }
.jk-ph { font-size: 8px; color: #777; margin-left: 7px; }
.jk-help { width: 11px; height: 11px; margin-left: auto; }
.jk-bell { width: 9px; height: 10px; margin-left: 10px; }
.jk-badge { width: 9px; height: 10px; margin-left: 4px; border-radius: 1px; background: #f0a33a; font-size: 7px; line-height: 10px; text-align: center; color: #fff; }
.jk-user { width: 8px; height: 8px; margin-left: 11px; }
.jk-link { font-size: 7.600px; margin-left: 4px; letter-spacing: .1px; }
.jk-out { width: 12px; height: 10px; margin-left: 12px; }
.jk-link-out { margin-left: 1px; }

.crumbs { height: 18px; flex: none; background: #f8f8f8; display: flex; align-items: center; padding-left: 13px; }
.crumb { font-size: 8.200px; color: #333; -webkit-text-stroke: .15px #333; }
.crumb-c { width: 3px; height: 5px; margin-left: 10px; }

/* page */
.page { flex: 1; min-height: 0; display: flex; }
.side { width: 162px; flex: none; border-right: 1px solid #eee; }
.tasks { list-style: none; margin: 0; padding: 8px 0 0; }
.task { height: 21.250px; display: flex; align-items: center; padding-left: 10px; gap: 3.500px; font-size: 7px; color: #3c3c3c; }
.task-i { width: 11px; height: 11px; }
.pane { font-size: 6px; color: #555; }
.pane-q { margin: 9px 0 10px; }
.pane-h { height: 19.500px; background: #e9edf0; display: flex; align-items: center; justify-content: space-between; padding: 0 11px 0 10px; font-size: 7px; font-weight: bold; color: #333; }
.pane-u { text-decoration: underline; font-size: 6.500px; }
.pane-c { width: 7px; height: 4px; color: #333; }
.pane-row { height: 17px; display: flex; align-items: center; padding-left: 9px; border-bottom: 1px solid #f1f1f1; }
.pane-note { padding-left: 8px; }
.pane-n { margin-right: 4px; }

.main { flex: 1; min-width: 0; padding: 0 7px; }
.desc { height: 18px; padding-top: 9px; display: flex; justify-content: flex-end; align-items: center; }
.desc-i { width: 7px; height: 7px; }
.desc .lnk { font-size: 7px; }
.lnk { color: #1f5f9e; font-weight: bold; }
.viewtabs { display: flex; align-items: center; height: 17px; }
.vt { width: 23px; height: 17px; background: #4d545d; color: #fff; border-radius: 2px 2px 0 0; font-size: 6.800px; font-weight: bold; display: flex; align-items: center; justify-content: center; }
.vt-add { color: #3d78b4; font-size: 10px; margin-left: 5px; }
.jobs { width: 624px; table-layout: fixed; border-collapse: collapse; font-size: 6.800px; border-top: 1px solid #d3d3d3; }
.c1 { width: 23px; } .c2 { width: 80px; } .c3 { width: 109px; } .c4 { width: 137px; } .c5 { width: 103px; } .c6 { width: 114px; } .c7 { width: 58px; }
.jobs th { height: 18px; background: #4d545d; color: #fff; text-align: left; padding: 1px 0 0 5px; font-size: 6.800px; }
.jobs td { height: 23px; padding: 1px 0 0 5px; border-bottom: 1px solid #ccc; color: #444; }
.jobs .ctr { text-align: center; padding: 0; }
.arrow { font-weight: normal; margin-left: 2px; }
.st-i { width: 18px; height: 16px; margin-left: 4px; }
.w-i { width: 15px; height: 15px; margin: 0 auto; }
.run-i { width: 11px; height: 11px; }
.iconsize { font-size: 6.800px; color: #444; margin: 4px 0 0 3px; height: 10px; display: flex; align-items: center; }
.sz { margin-left: 2.500px; }
.sz-first { margin-left: 3px; }
.feeds { display: flex; padding-left: 304px; height: 6px; margin-top: 1px; align-items: center; font-size: 5.800px; }
.feed { display: flex; align-items: center; gap: 3px; white-space: nowrap; }
.feed-a { margin-left: 22px; }
.feed-b { margin-left: 22px; }
.feed-c { margin-left: 22px; }
.rss { width: 5px; height: 5px; }

.foot { height: 28px; flex: none; background: #f8f8f8; display: flex; justify-content: flex-end; align-items: center; gap: 20px; padding-right: 9px; font-size: 6.700px; color: #333; }

.downloads { height: 27px; flex: none; background: #fff; border-top: 1px solid #e6e6e6; display: flex; align-items: center; padding-left: 1.500px; }
.dl { width: 111px; height: 21px; display: flex; align-items: center; border-right: 1px solid #dadce0; padding: 0 7px 0 9px; color: #444; font-size: 6.400px; flex: none; }
.dl-i { width: 6px; height: 7px; }
.dl-name { margin-left: 7px; white-space: nowrap; }
.dl-c { width: 6px; height: 4px; margin-left: auto; margin-right: 1px; color: #777; }
.dl-stack { padding-left: 15px; }
.dl-text { display: flex; flex-direction: column; gap: 3px; }
.dl-sub { font-size: 4.800px; margin-left: 7px; }
.showall { margin-left: auto; width: 39px; height: 16px; padding: 0; background: #fff; border: 1px solid #ececec; border-radius: 2px; color: #1a73e8; font: 6.500px "Liberation Sans", sans-serif; }
.dl-x { width: 6px; height: 6px; margin: 0 6px 0 5px; }
```
